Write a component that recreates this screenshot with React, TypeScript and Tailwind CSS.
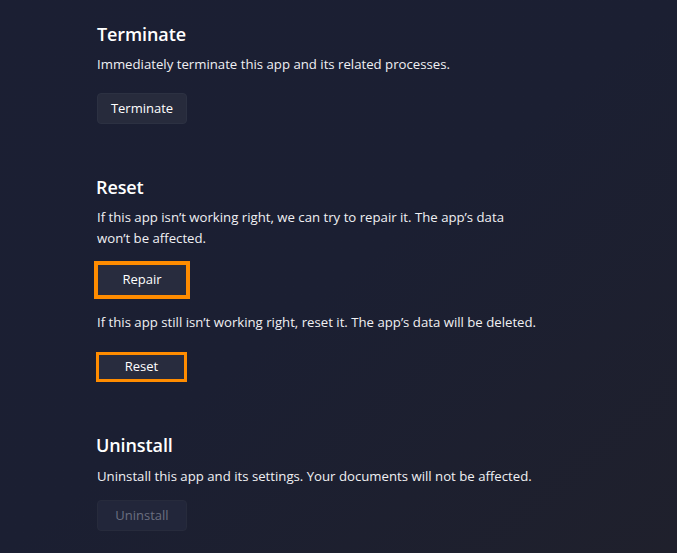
export default function App() {
  return (
    <div className="min-h-screen w-full bg-gradient-to-br from-[#1b1f33] via-[#1b1f32] to-[#1f202c] pl-[97px] pt-[20px] font-['Open_Sans',sans-serif] text-[#f0f0f3]">
      {/* Terminate */}
      <section>
        <h2 className="text-[18px] font-semibold leading-[28px] tracking-[-0.1px] text-white">Terminate</h2>
        <p className="mt-[6px] text-[13.2px] leading-[20px]">
          Immediately terminate this app and its related processes.
        </p>
        <button className="mt-[19px] h-[31px] w-[90px] rounded-[4px] border border-[#2c3142] bg-[#272b3c] text-[13px] text-white">
          Terminate
        </button>
      </section>

      {/* Reset */}
      <section className="mt-[49px]">
        <h2 className="-ml-px text-[18px] font-semibold leading-[28px] tracking-[-0.1px] text-white">Reset</h2>
        <p className="mt-[6px] text-[13.2px] leading-[21px]">
          If this app isn’t working right, we can try to repair it. The app’s data
          <br />
          won’t be affected.
        </p>
        <button className="-ml-[3px] mt-[12px] h-[38px] w-[96px] border-4 border-[#ff8c00] bg-[#282c3e] text-[13px] text-white">
          Repair
        </button>
        <p className="mt-[13px] text-[13.2px] leading-[21px]">
          If this app still isn’t working right, reset it. The app’s data will be deleted.
        </p>
        <button className="-ml-px mt-[19px] h-[30px] w-[91px] border-[3px] border-[#ff8c00] bg-[#282c3e] text-[13px] text-white">
          Reset
        </button>
      </section>

      {/* Uninstall */}
      <section className="mt-[49px]">
        <h2 className="-ml-px text-[18px] font-semibold leading-[28px] tracking-[-0.1px] text-white">Uninstall</h2>
        <p className="mt-[7px] text-[13.2px] leading-[20px]">
          Uninstall this app and its settings. Your documents will not be affected.
        </p>
        <button
          disabled
          className="mt-[14px] h-[31px] w-[90px] rounded-[4px] border border-[#272b3c] bg-[#22263a] text-[13px] text-[#6b6f80]"
        >
          Uninstall
        </button>
      </section>
    </div>
  );
}
